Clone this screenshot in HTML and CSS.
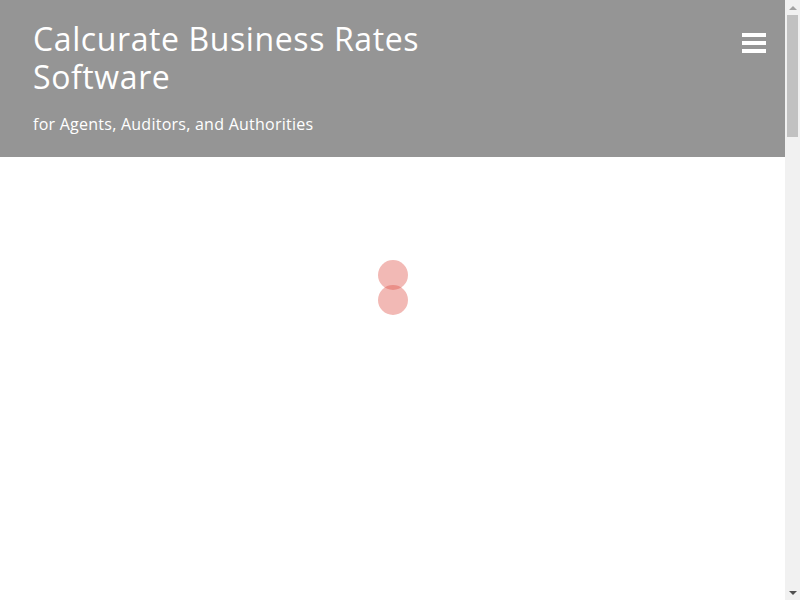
FILE: index.html
```html
<!DOCTYPE html>
<html lang="en">
<head>
<meta charset="utf-8">
<title>Calcurate Business Rates Software</title>
<link rel="stylesheet" href="styles.css">
</head>
<body>
<div class="frame">
  <div class="page">
    <header class="site-header">
      <div class="branding">
        <h1 class="site-title">Calcurate Business Rates Software</h1>
        <p class="site-tagline">for Agents, Auditors, and Authorities</p>
      </div>
      <button class="menu-toggle" aria-label="Menu">
        <span class="bar"></span>
        <span class="bar"></span>
        <span class="bar"></span>
      </button>
    </header>
    <main class="content">
      <div class="loader">
        <span class="dot"></span>
        <span class="dot dot-lower"></span>
      </div>
    </main>
  </div>
  <div class="scrollbar" aria-hidden="true">
    <div class="sb-btn sb-up"><span class="arrow-up"></span></div>
    <div class="sb-track"><div class="sb-thumb"></div></div>
    <div class="sb-btn sb-down"><span class="arrow-down"></span></div>
  </div>
</div>
</body>
</html>
```
FILE: styles.css
```css
html, body {
  margin: 0;
  padding: 0;
  background: #ffffff;
  overflow: hidden;
}
body {
  font-family: "Open Sans", "Liberation Sans", sans-serif;
  color: #333;
}
.frame {
  display: grid;
  grid-template-columns: 1fr 15px;
  height: 600px;
}
.page {
  display: flex;
  flex-direction: column;
  min-width: 0;
}
.site-header {
  background: #959595;
  height: 157px;
  box-sizing: border-box;
  padding: 20px 19px 0 33px;
  display: flex;
  justify-content: space-between;
  align-items: flex-start;
}
.branding {
  width: 430px;
}
.site-title {
  margin: 0;
  font-size: 32px;
  line-height: 38px;
  font-weight: 500;
  letter-spacing: 0.6px;
  color: #ffffff;
}
.site-tagline {
  margin: 17px 0 0;
  font-size: 16px;
  line-height: 22px;
  font-weight: 500;
  letter-spacing: 0.25px;
  color: #ffffff;
}
.menu-toggle {
  margin-top: 13px;
  padding: 0;
  border: 0;
  background: transparent;
  display: flex;
  flex-direction: column;
  gap: 4px;
  cursor: pointer;
}
.menu-toggle .bar {
  display: block;
  width: 24px;
  height: 4px;
  background: #ffffff;
}
.content {
  flex: 1;
  display: flex;
  flex-direction: column;
  align-items: center;
  padding-top: 103px;
}
.loader {
  display: flex;
  flex-direction: column;
  align-items: center;
  margin-left: 1px;
}
.dot {
  display: block;
  width: 30px;
  height: 30px;
  border-radius: 50%;
  background: rgba(222, 80, 70, 0.4);
}
.dot-lower {
  margin-top: -5px;
}
.scrollbar {
  background: #f1f1f1;
  display: flex;
  flex-direction: column;
}
.sb-btn {
  height: 15px;
  display: flex;
  align-items: center;
  justify-content: center;
}
.arrow-up {
  width: 0;
  height: 0;
  border-left: 4px solid transparent;
  border-right: 4px solid transparent;
  border-bottom: 4px solid #a3a3a3;
}
.arrow-down {
  width: 0;
  height: 0;
  border-left: 4px solid transparent;
  border-right: 4px solid transparent;
  border-top: 4px solid #505050;
}
.sb-track {
  flex: 1;
  padding: 0 2px;
}
.sb-thumb {
  height: 122px;
  background: #c1c1c1;
}
```
